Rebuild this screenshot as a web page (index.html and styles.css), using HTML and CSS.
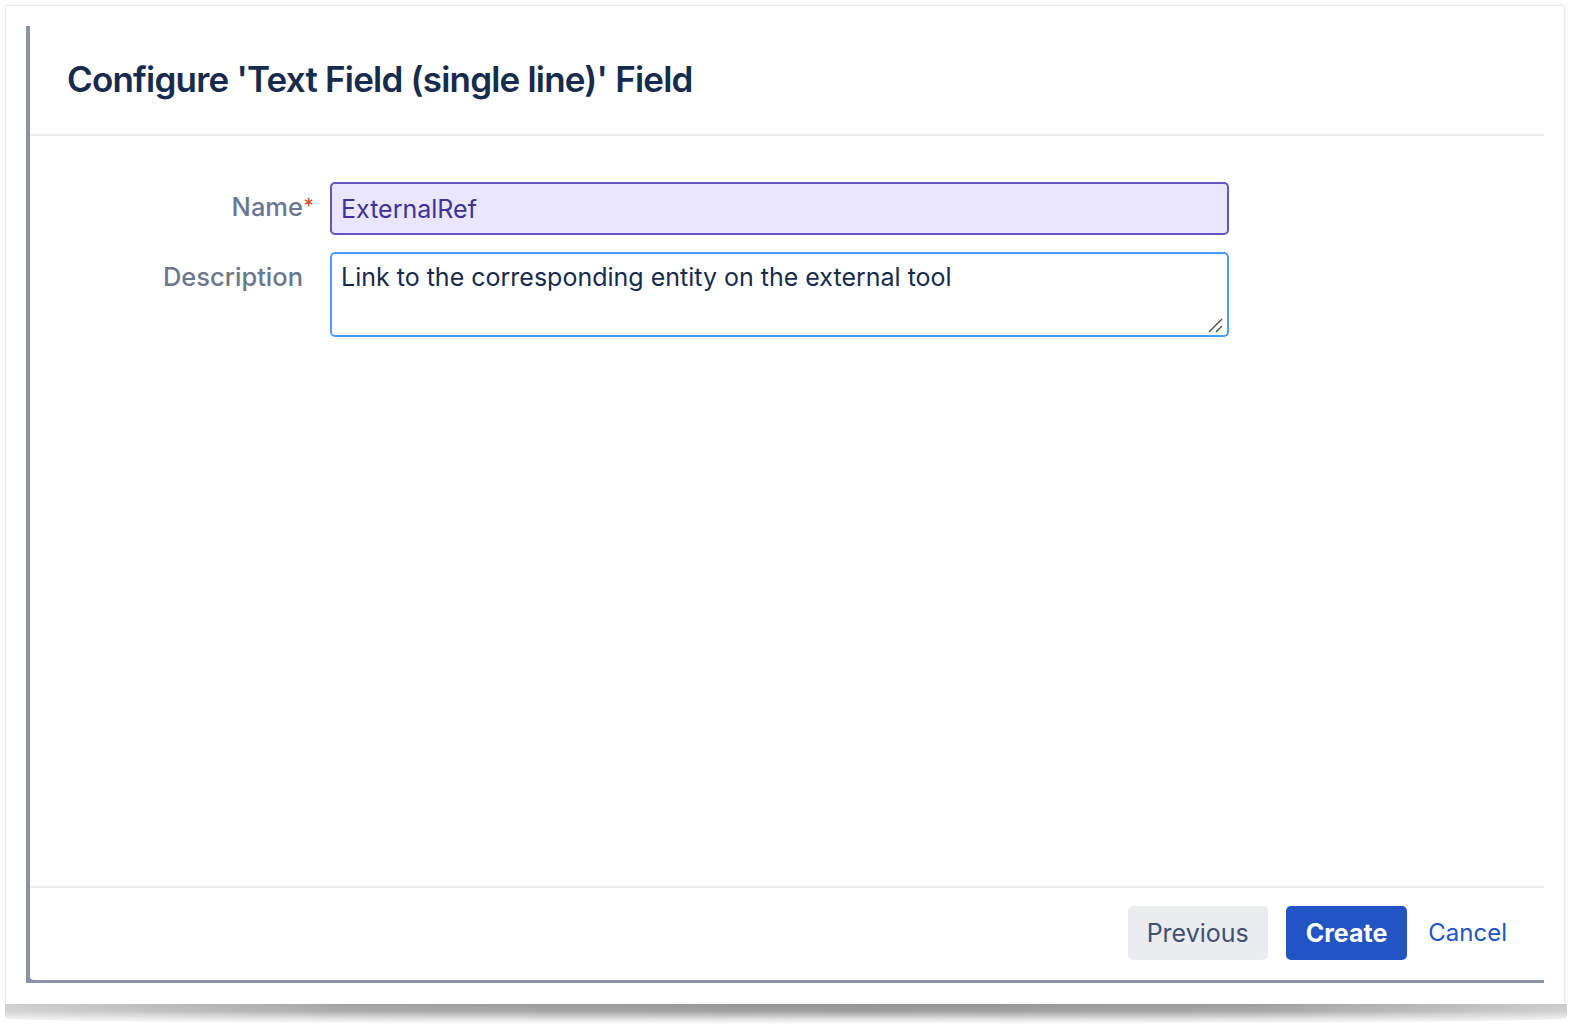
FILE: index.html
```html
<!DOCTYPE html>
<html lang="en">
<head>
  <meta charset="UTF-8" />
  <title>Configure Field</title>
  <meta name="viewport" content="width=device-width, initial-scale=1.0">
  <link rel="stylesheet" href="styles.css">
</head>
<body>

  <div class="shot">
    <div class="backdrop">
      <div class="dialog">
        <header class="dialog-header">
          <h2 class="dialog-title">Configure 'Text Field (single line)' Field</h2>
        </header>

        <form class="dialog-body">
          <label class="field-label" for="fieldName">Name<span class="required">*</span></label>
          <input class="text-input" type="text" id="fieldName" value="ExternalRef">

          <label class="field-label" for="fieldDesc">Description</label>
          <div class="area-wrap">
            <textarea class="text-area" id="fieldDesc">Link to the corresponding entity on the external tool</textarea>
            <!-- resize grip -->
            <svg class="grip" width="15" height="15" viewBox="0 0 15 15">
              <path d="M1 14 L14 1 M8 14 L14 8" stroke="#4a4a4a" stroke-width="1.4" fill="none"/>
            </svg>
          </div>
        </form>

        <footer class="dialog-footer">
          <button class="btn btn-subtle" type="button">Previous</button>
          <button class="btn btn-primary" type="button">Create</button>
          <a class="btn-link" href="#">Cancel</a>
        </footer>
      </div>
    </div>
  </div>
  <div class="shot-shadow"></div>

</body>
</html>
```

FILE: styles.css
```css
* {
  margin: 0; padding: 0; box-sizing: border-box;
}
html, body {
  background: #fff;
  font-family: 'Inter', 'Liberation Sans', sans-serif;
}

/* the white "screenshot card" */
.shot {
  width: 1558px; height: 998px;
  margin: 6px 0 0 6px;
  padding: 20px 20px 21px 20px;
  background: #fff;
  box-shadow: 0 0 3px rgba(0,0,0,0.22);
}

/* curled drop shadow under the card */
.shot-shadow {
  width: 1562px; height: 20px;
  margin-left: 5px;
  background:
    linear-gradient(to bottom, rgba(255,255,255,0) 0%, rgba(255,255,255,0.1) 35%, rgba(255,255,255,0.7) 75%, #fff 100%),
    linear-gradient(to right, #cfcfcf 0%, #a2a2a2 22%, #929292 55%, #9e9e9e 80%, #cccccc 100%);
  border-bottom-left-radius: 40% 6px;
  border-bottom-right-radius: 40% 6px;
}

/* grey page behind the dialog, only visible on the left and bottom */
.backdrop {
  height: 100%;
  background: #8993a4;
  padding: 0 0 3px 4px;
}

.dialog {
  height: 100%;
  background: #fff;
  border-bottom-left-radius: 4px;
  display: flex; flex-direction: column;
}

.dialog-header {
  height: 110px;
  padding: 31px 0 0 37px;
  border-bottom: 2px solid #ebecf0;
}

.dialog-title {
  font-size: 35px; line-height: 44px;
  font-weight: 600;
  color: #172b4d;
  letter-spacing: -0.8px;
}

.dialog-body {
  flex: 1;
  display: grid;
  grid-template-columns: 273px 899px;
  grid-auto-rows: min-content;
  column-gap: 27px; row-gap: 17px;
  padding-top: 46px;
}

.field-label {
  position: relative;
  text-align: right;
  font-size: 25.5px; line-height: 50px;
  font-weight: 500;
  color: #6b778c;
}

.required {
  position: absolute; /* hangs past the label column */
  right: -11px; top: -1px;
  font-size: 20px;
  color: #e0502a;
}

.text-input, .text-area {
  display: block;
  width: 100%;
  font-family: inherit;
  font-size: 25px;
  border-radius: 5px;
  border: 2px solid;
  outline: none;
}

.text-input {
  height: 53px;
  padding: 0 9px;
  background: #eae6ff;
  border-color: #6554c0;
  color: #403294;
}

.area-wrap { position: relative; }

.text-area {
  height: 85px;
  padding: 8px 9px;
  line-height: 30px;
  background: #fff;
  border-color: #4c9aff;
  color: #172b4d;
  resize: none;
}

.grip {
  position: absolute;
  right: 6px; bottom: 4px;
}

.dialog-footer {
  height: 94px;
  border-top: 2px solid #ebecf0;
  padding: 18px 37px 0 0;
  display: flex; justify-content: flex-end; align-items: flex-start;
}

.btn {
  height: 54px;
  padding: 0 20px;
  border: none; border-radius: 5px;
  font-family: inherit; font-size: 25px;
  cursor: pointer;
}

.btn-subtle {
  padding: 0 19px;
  background: #ebecf0; color: #42526e;
  font-weight: 400;
}

.btn-primary {
  margin-left: 18px;
  background: #2154c5; color: #fff;
  font-weight: 700;
}

.btn-link {
  margin-left: 21px;
  line-height: 54px;
  font-size: 24px;
  color: #2154c5;
  text-decoration: none;
}
```
